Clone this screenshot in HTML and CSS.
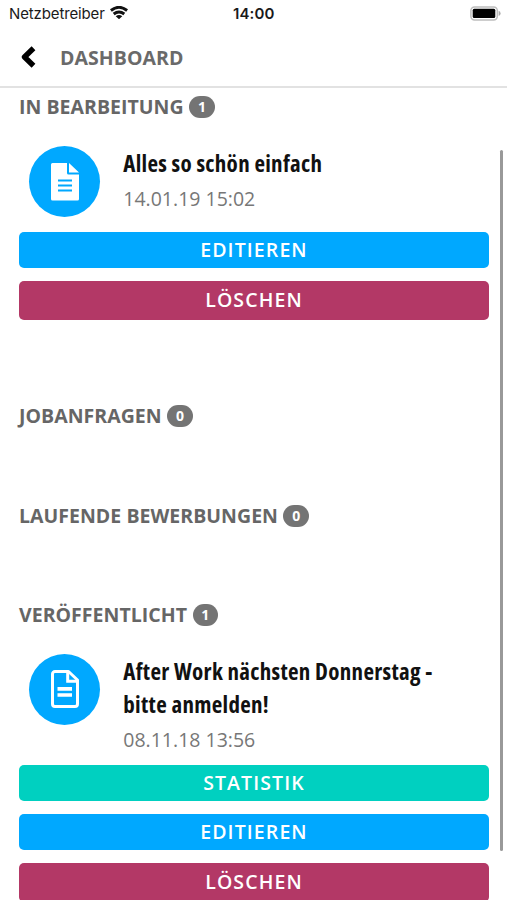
FILE: index.html
```html
<!DOCTYPE html>
<html lang="de">
<head>
<meta charset="utf-8">
<title>Dashboard</title>
<link rel="stylesheet" href="styles.css">
</head>
<body>
<div class="statusbar">
  <span class="carrier">Netzbetreiber</span>
  <svg class="wifi" width="18" height="13" viewBox="0 0 18 13"><path d="M.9 4.500q8.100-6.400 16.200 0M3.700 8q5.300-4.200 10.600 0" fill="none" stroke="#111" stroke-width="2.900"/><path d="M9 13.200 5.700 10.200q3.300-2.300 6.600 0z" fill="#111"/></svg>
  <span class="clock">14:00</span>
  <svg class="battery" width="31" height="15" viewBox="0 0 31 15"><rect x=".9" y=".9" width="26.4" height="13" rx="3.6" fill="#fff" stroke="#bdbdbd" stroke-width="1.5"/><rect x="2.7" y="2.7" width="22.6" height="9.4" rx="1.5" fill="#000"/><path d="M28.6 4.8q2 .8 2 2.6t-2 2.6z" fill="#aaa"/></svg>
</div>
<header class="header">
  <svg class="back" width="16" height="24" viewBox="0 0 16 24"><path d="M13.500 3.200 4.500 12l9 8.800" fill="none" stroke="#000" stroke-width="5.400" stroke-linejoin="round"/></svg>
  <h1 class="title">DASHBOARD</h1>
</header>
<main class="content">
  <section class="section first">
    <h2 class="heading"><span class="label">IN BEARBEITUNG</span><span class="count">1</span></h2>
    <article class="entry">
      <div class="avatar"><svg width="28" height="38" viewBox="0 0 28 38"><path fill="#fff" d="M1.5 0H16v10a1.5 1.5 0 0 0 1.5 1.5H28v24.500a1.500 1.500 0 0 1-1.500 1.500h-25A1.500 1.500 0 0 1 0 36V1.500A1.500 1.500 0 0 1 1.500 0zM18 0 28 9.500H18z"/><path d="M7 17.500h14M7 22.500h14M7 27.500h14" stroke="#00a8ff" stroke-width="2"/></svg></div>
      <div class="info">
        <h3 class="name">Alles so schön einfach</h3>
        <time class="date">14.01.19 15:02</time>
      </div>
    </article>
    <div class="actions">
      <button class="btn blue">EDITIEREN</button>
      <button class="btn red">LÖSCHEN</button>
    </div>
  </section>
  <section class="section jobs">
    <h2 class="heading"><span class="label">JOBANFRAGEN</span><span class="count">0</span></h2>
  </section>
  <section class="section running">
    <h2 class="heading"><span class="label">LAUFENDE BEWERBUNGEN</span><span class="count">0</span></h2>
  </section>
  <section class="section">
    <h2 class="heading"><span class="label">VERÖFFENTLICHT</span><span class="count">1</span></h2>
    <article class="entry tall">
      <div class="avatar"><svg width="28" height="38" viewBox="0 0 28 38"><path fill="none" stroke="#fff" stroke-width="3" stroke-linejoin="round" d="M4 1.500h13.500l9 8.500V34a2.500 2.500 0 0 1-2.500 2.500H4A2.500 2.500 0 0 1 1.500 34V4A2.500 2.500 0 0 1 4 1.500z"/><path fill="none" stroke="#fff" stroke-width="3" d="M16.700 1.500v9.800h9.800"/><path d="M6.500 18.900h14.500M6.500 25h14.500" stroke="#fff" stroke-width="3.600"/></svg></div>
      <div class="info">
        <h3 class="name">After Work nächsten Donnerstag -<br>bitte anmelden!</h3>
        <time class="date">08.11.18 13:56</time>
      </div>
    </article>
    <div class="actions">
      <button class="btn green">STATISTIK</button>
      <button class="btn blue">EDITIEREN</button>
      <button class="btn red">LÖSCHEN</button>
    </div>
  </section>
</main>
<div class="scrollbar"></div>
</body>
</html>
```
FILE: styles.css
```css
* { box-sizing: border-box; }
body {
  margin: 0;
  height: 900px;
  overflow: hidden;
  background: #fff;
  font-family: "Open Sans", "Noto Sans", sans-serif;
  display: flex;
  flex-direction: column;
}
h1, h2, h3 { margin: 0; }
.statusbar {
  height: 28px;
  flex: none;
  display: grid;
  grid-template-columns: 100px 133px 1fr 37px;
  align-items: center;
  padding-left: 9px;
  font-family: Inter, "Liberation Sans", sans-serif;
  font-size: 15px;
  line-height: 28px;
  color: #1a1a1a;
}
.carrier { letter-spacing: -0.13px; }
.wifi { margin: -3px 0 0 1px; }
.clock { margin-left: -9px; font-weight: 600; letter-spacing: 0.1px; }
.battery { margin-top: -2px; }
.header {
  flex: none;
  height: 60px;
  display: flex;
  align-items: center;
  padding-left: 20px;
  border-bottom: 2px solid #e2e2e2;
}
.title {
  margin: 1px 0 0 24px;
  font-size: 19.5px;
  line-height: 28px;
  font-weight: 660;
  letter-spacing: 0.05px;
  color: #6a6a6a;
}
.content {
  flex: 1;
  min-height: 0;
  overflow: hidden;
  padding: 4px 18px 0 19px;
}
.first { height: 309px; }
.jobs { height: 99.500px; }
.running { height: 99px; }
.heading {
  height: 30px;
  display: flex;
  align-items: center;
  gap: 5.500px;
}
.label {
  font-size: 19.5px;
  line-height: 30px;
  font-weight: 660;
  letter-spacing: 0.03px;
  color: #666;
}
.count {
  width: 25.500px;
  height: 22px;
  border-radius: 11px;
  background: #747474;
  color: #fff;
  font-size: 14px;
  line-height: 22px;
  font-weight: 700;
  text-align: center;
}
.entry {
  display: flex;
  gap: 23.300px;
  height: 110px;
  padding: 24px 0 0 10px;
}
.entry.tall { height: 135.500px; }
.avatar {
  width: 71px;
  height: 71px;
  flex: none;
  border-radius: 50%;
  background: #00a8ff;
  display: flex;
  align-items: center;
  justify-content: center;
}
.info { padding-top: 1px; }
.name {
  font-size: 23px;
  line-height: 33px;
  font-weight: 700;
  font-stretch: 75%;
  letter-spacing: 0.3px;
  color: #111;
  white-space: nowrap;
}
.date {
  display: block;
  font-size: 19.5px;
  line-height: 37px;
  color: #777;
}
.actions {
  display: flex;
  flex-direction: column;
  gap: 12.900px;
}
.btn {
  height: 36px;
  width: 470px;
  border: 0;
  border-radius: 5px;
  padding: 0;
  font: 540 19.5px/36px "Open Sans", sans-serif;
  letter-spacing: 1.1px;
  color: #fff;
}
.blue { background: #00a8ff; }
.red { background: #b33866; height: 39px; }
.green { background: #00d0c0; }
.scrollbar {
  position: absolute;
  left: 500px;
  top: 150px;
  width: 3px;
  height: 701px;
  border-radius: 2px;
  background: #999;
}
```
